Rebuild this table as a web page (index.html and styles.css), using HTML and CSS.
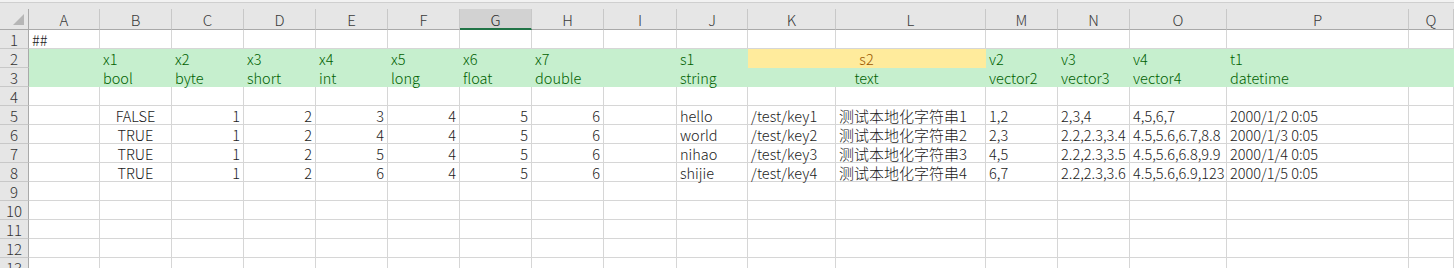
FILE: index.html
```html
<!DOCTYPE html>
<html lang="zh">
<head>
<meta charset="utf-8">
<title>Sheet</title>
<link rel="stylesheet" href="styles.css">
</head>
<body>
<div class="topbar"></div>
<div class="sheet">
  <div class="ch corner"><span class="tri"></span></div>
  <div class="ch">A</div><div class="ch">B</div><div class="ch">C</div><div class="ch">D</div><div class="ch">E</div><div class="ch">F</div><div class="ch sel">G</div><div class="ch">H</div><div class="ch">I</div><div class="ch">J</div><div class="ch">K</div><div class="ch">L</div><div class="ch">M</div><div class="ch">N</div><div class="ch">O</div><div class="ch">P</div><div class="ch">Q</div>

  <div class="rh">1</div>
  <div class="c">##</div><div class="c"></div><div class="c"></div><div class="c"></div><div class="c"></div><div class="c"></div><div class="c"></div><div class="c"></div><div class="c"></div><div class="c"></div><div class="c"></div><div class="c"></div><div class="c"></div><div class="c"></div><div class="c"></div><div class="c"></div><div class="c"></div>

  <div class="rh">2</div>
  <div class="c g"></div><div class="c g">x1</div><div class="c g">x2</div><div class="c g">x3</div><div class="c g">x4</div><div class="c g">x5</div><div class="c g">x6</div><div class="c g">x7</div><div class="c g"></div><div class="c g">s1</div><div class="c y m">s2</div><div class="c g">v2</div><div class="c g">v3</div><div class="c g">v4</div><div class="c g">t1</div><div class="c g"></div>

  <div class="rh">3</div>
  <div class="c g"></div><div class="c g">bool</div><div class="c g">byte</div><div class="c g">short</div><div class="c g">int</div><div class="c g">long</div><div class="c g">float</div><div class="c g">double</div><div class="c g"></div><div class="c g">string</div><div class="c g m">text</div><div class="c g">vector2</div><div class="c g">vector3</div><div class="c g">vector4</div><div class="c g">datetime</div><div class="c g"></div>

  <div class="rh">4</div>
  <div class="c"></div><div class="c"></div><div class="c"></div><div class="c"></div><div class="c"></div><div class="c"></div><div class="c"></div><div class="c"></div><div class="c"></div><div class="c"></div><div class="c"></div><div class="c"></div><div class="c"></div><div class="c"></div><div class="c"></div><div class="c"></div><div class="c"></div>

  <div class="rh">5</div>
  <div class="c"></div><div class="c b">FALSE</div><div class="c n">1</div><div class="c n">2</div><div class="c n">3</div><div class="c n">4</div><div class="c n">5</div><div class="c n">6</div><div class="c"></div><div class="c">hello</div><div class="c">/test/key1</div><div class="c cjk">测试本地化字符串1</div><div class="c">1,2</div><div class="c">2,3,4</div><div class="c">4,5,6,7</div><div class="c">2000/1/2 0:05</div><div class="c"></div>

  <div class="rh">6</div>
  <div class="c"></div><div class="c b">TRUE</div><div class="c n">1</div><div class="c n">2</div><div class="c n">4</div><div class="c n">4</div><div class="c n">5</div><div class="c n">6</div><div class="c"></div><div class="c">world</div><div class="c">/test/key2</div><div class="c cjk">测试本地化字符串2</div><div class="c">2,3</div><div class="c">2.2,2.3,3.4</div><div class="c">4.5,5.6,6.7,8.8</div><div class="c">2000/1/3 0:05</div><div class="c"></div>

  <div class="rh">7</div>
  <div class="c"></div><div class="c b">TRUE</div><div class="c n">1</div><div class="c n">2</div><div class="c n">5</div><div class="c n">4</div><div class="c n">5</div><div class="c n">6</div><div class="c"></div><div class="c">nihao</div><div class="c">/test/key3</div><div class="c cjk">测试本地化字符串3</div><div class="c">4,5</div><div class="c">2.2,2.3,3.5</div><div class="c">4.5,5.6,6.8,9.9</div><div class="c">2000/1/4 0:05</div><div class="c"></div>

  <div class="rh">8</div>
  <div class="c"></div><div class="c b">TRUE</div><div class="c n">1</div><div class="c n">2</div><div class="c n">6</div><div class="c n">4</div><div class="c n">5</div><div class="c n">6</div><div class="c"></div><div class="c">shijie</div><div class="c">/test/key4</div><div class="c cjk">测试本地化字符串4</div><div class="c">6,7</div><div class="c">2.2,2.3,3.6</div><div class="c">4.5,5.6,6.9,123</div><div class="c">2000/1/5 0:05</div><div class="c"></div>

  <div class="rh">9</div>
  <div class="c"></div><div class="c"></div><div class="c"></div><div class="c"></div><div class="c"></div><div class="c"></div><div class="c"></div><div class="c"></div><div class="c"></div><div class="c"></div><div class="c"></div><div class="c"></div><div class="c"></div><div class="c"></div><div class="c"></div><div class="c"></div><div class="c"></div>

  <div class="rh">10</div>
  <div class="c"></div><div class="c"></div><div class="c"></div><div class="c"></div><div class="c"></div><div class="c"></div><div class="c"></div><div class="c"></div><div class="c"></div><div class="c"></div><div class="c"></div><div class="c"></div><div class="c"></div><div class="c"></div><div class="c"></div><div class="c"></div><div class="c"></div>

  <div class="rh">11</div>
  <div class="c"></div><div class="c"></div><div class="c"></div><div class="c"></div><div class="c"></div><div class="c"></div><div class="c"></div><div class="c"></div><div class="c"></div><div class="c"></div><div class="c"></div><div class="c"></div><div class="c"></div><div class="c"></div><div class="c"></div><div class="c"></div><div class="c"></div>

  <div class="rh">12</div>
  <div class="c"></div><div class="c"></div><div class="c"></div><div class="c"></div><div class="c"></div><div class="c"></div><div class="c"></div><div class="c"></div><div class="c"></div><div class="c"></div><div class="c"></div><div class="c"></div><div class="c"></div><div class="c"></div><div class="c"></div><div class="c"></div><div class="c"></div>

  <div class="rh">13</div>
  <div class="c"></div><div class="c"></div><div class="c"></div><div class="c"></div><div class="c"></div><div class="c"></div><div class="c"></div><div class="c"></div><div class="c"></div><div class="c"></div><div class="c"></div><div class="c"></div><div class="c"></div><div class="c"></div><div class="c"></div><div class="c"></div><div class="c"></div>
</div>
</body>
</html>
```

FILE: styles.css
```css
html, body {
  margin: 0;
  padding: 0;
  background: #ffffff;
  overflow: hidden;
}

body {
  width: 1454px;
  height: 268px;
  font-family: "Noto Sans CJK SC", "Liberation Sans", sans-serif;
  font-size: 14.5px;
  font-weight: 300;
  color: #1b1b1b;
}

.topbar {
  height: 7px;
  background: #e6e6e6;
  border-top: 2px solid #f2f2f2;
  box-shadow: inset 0 1px 0 #cfcfcf;
}

.sheet {
  display: grid;
  grid-template-columns: 29px 71px 72px 72px 72px 72px 72px 72px 72px 73px 71px 88px 150px 72px 72px 97px 182px 1fr;
  grid-template-rows: 21px;
  grid-auto-rows: 19px;
}

.ch, .rh, .c {
  box-sizing: border-box;
  white-space: nowrap;
  line-height: 18px;
}

.ch {
  background: #e6e6e6;
  border-right: 1px solid #c8c8c8;
  border-bottom: 1px solid #a9a9a9;
  text-align: center;
  color: #3a3a3a;
  line-height: 20px;
  padding-top: 1px;
  font-size: 15px;
  overflow: hidden;
}

.ch.sel {
  background: #d2d2d2;
  border-bottom: 2px solid #217346;
  color: #2c2c2c;
}

.corner {
  position: relative;
  border-right: 1px solid #a9a9a9;
}

.tri {
  position: absolute;
  right: 4px;
  bottom: 4px;
  width: 0;
  height: 0;
  border-style: solid;
  border-width: 0 0 11px 11px;
  border-color: transparent transparent #b6b6b6 transparent;
}

.rh {
  background: #e6e6e6;
  border-right: 1px solid #a9a9a9;
  border-bottom: 1px solid #c8c8c8;
  text-align: center;
  color: #333333;
  line-height: 19px;
  font-size: 15px;
  overflow: hidden;
}

.c {
  border-right: 1px solid #d6d6d6;
  border-bottom: 1px solid #d6d6d6;
  padding: 0 3px;
  line-height: 19px;
  overflow: visible;
}

.c.cjk {
  font-size: 15px;
}

.c.n {
  text-align: right;
  padding-right: 3px;
}

.c.b {
  text-align: center;
}

.c.g {
  background: #c6efce;
  border-color: #c6efce;
  color: #006100;
}

.c.y {
  background: #ffeb9c;
  border-color: #ffeb9c;
  color: #9c5700;
}

.c.m {
  grid-column: span 2;
  text-align: center;
}
```
